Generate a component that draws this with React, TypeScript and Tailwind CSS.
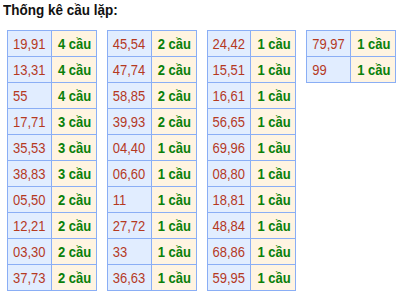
import React from "react";

const tables: [string, number][][] = [
  [
    ["19,91", 4], ["13,31", 4], ["55", 4], ["17,71", 3], ["35,53", 3],
    ["38,83", 3], ["05,50", 2], ["12,21", 2], ["03,30", 2], ["37,73", 2],
  ],
  [
    ["45,54", 2], ["47,74", 2], ["58,85", 2], ["39,93", 2], ["04,40", 1],
    ["06,60", 1], ["11", 1], ["27,72", 1], ["33", 1], ["36,63", 1],
  ],
  [
    ["24,42", 1], ["15,51", 1], ["16,61", 1], ["56,65", 1], ["69,96", 1],
    ["08,80", 1], ["18,81", 1], ["48,84", 1], ["68,86", 1], ["59,95", 1],
  ],
  [
    ["79,97", 1], ["99", 1],
  ],
];

const CauTable = ({ rows }: { rows: [string, number][] }) => (
  <table className="border-collapse border border-[#8aaef5] self-start">
    <tbody>
      {rows.map(([pair, count]) => (
        <tr key={pair} className="h-[26px]">
          <td className="w-[44px] border border-[#8aaef5] bg-[#e1edff] pl-[5px] text-[13px] text-[#b5391f] leading-none">
            <span className="inline-block scale-y-[1.15]">{pair}</span>
          </td>
          <td className="w-[45px] border border-[#8aaef5] bg-[#fff4e1] pl-[6px] text-[13px] font-bold text-[#0a800a] leading-none">
            <span className="inline-block scale-y-[1.15]">{count} cầu</span>
          </td>
        </tr>
      ))}
    </tbody>
  </table>
);

export default function App() {
  return (
    <div className="w-[399px] h-[299px] bg-white px-[3px] pt-[3px] font-['Liberation_Sans',Arial,sans-serif]">
      <div className="text-[13.5px] font-bold text-[#111] leading-[18px]">
        <span className="inline-block scale-y-[1.15] origin-bottom">Thống kê cầu lặp:</span>
      </div>
      <div className="flex gap-[10px] ml-[4px] mt-[9px]">
        {tables.map((rows, i) => (
          <CauTable key={i} rows={rows} />
        ))}
      </div>
    </div>
  );
}
